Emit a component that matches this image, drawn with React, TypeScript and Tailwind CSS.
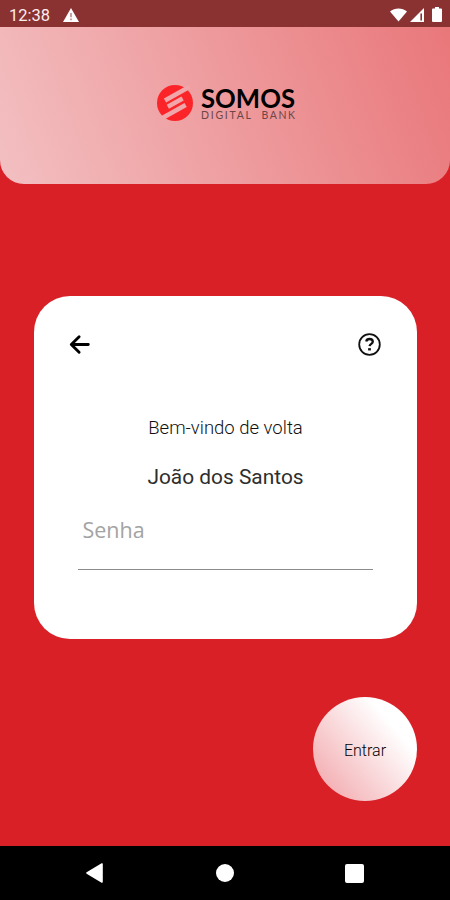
import { useState } from "react";

const LogoMark = () => (
  <svg viewBox="0 0 36 36" className="h-9 w-9 shrink-0">
    <circle cx="18" cy="18" r="18" fill="#fb2529" />
    <g stroke="#f1a6a9" strokeWidth="4.6" fill="none">
      <path d="M8 15.6 L32.5 1.8" />
      <path d="M10.8 21.8 L25.6 13.4" />
      <path d="M4.5 33.6 L28.6 20" />
    </g>
  </svg>
);

const Logo = () => (
  <div className="flex items-center gap-2">
    <LogoMark />
    <svg viewBox="0 -6 95 46" className="h-[46px] w-[95px] overflow-visible">
      <text
        x="0"
        y="22.4"
        textLength="94"
        lengthAdjust="spacingAndGlyphs"
        className="fill-black font-['Lato'] text-[27px] font-bold"
      >
        SOMOS
      </text>
      <text x="0" y="32.8" textLength="50" className="fill-[#6d4547] font-['Lato'] text-[10.5px]">
        DIGITAL
      </text>
      <text x="60.5" y="32.8" textLength="33.5" className="fill-[#6d4547] font-['Lato'] text-[10.5px]">
        BANK
      </text>
    </svg>
  </div>
);

const StatusBar = () => (
  <div className="flex h-[27px] shrink-0 items-center bg-[#8a3132] pr-2 pl-[9px] pt-[2px]">
    <span className="w-[41px] pt-[3px] font-['Roboto'] text-[16.5px] leading-none text-[#fbeeee]">12:38</span>
    <svg viewBox="0 0 16 14" className="ml-[13px] h-[14px] w-4">
      <path d="M8 0 L16 14 H0 Z" fill="#fff" />
      <path d="M8 5 V9.3 M8 10.6 V12.2" stroke="#b98083" strokeWidth="1.5" />
    </svg>
    <div className="ml-auto flex items-center gap-[3px]">
      <svg viewBox="0 0 18 14" className="h-[14px] w-[17px]">
        <path d="M0 3.2 C5 -1 13 -1 18 3.2 L9 14 Z" fill="#fff" />
      </svg>
      <svg viewBox="0 0 14 14" className="h-[14px] w-[14px]">
        <path d="M14 0 V14 H0 Z" fill="#fff" />
        <path d="M11.2 5.5 V12.5" stroke="#8a3132" strokeWidth="1.6" />
      </svg>
      <svg viewBox="0 0 10 15" className="ml-[5px] h-[15px] w-[10px]">
        <path d="M3 0 H7 V1.6 H9 Q10 1.6 10 2.6 V14 Q10 15 9 15 H1 Q0 15 0 14 V2.6 Q0 1.6 1 1.6 H3 Z" fill="#fff" />
      </svg>
    </div>
  </div>
);

const LoginCard = () => {
  const [password, setPassword] = useState("");

  return (
    <div className="mx-auto mt-28 flex h-[343px] w-[383px] flex-col rounded-[36px] bg-white pr-9 pl-[35px]">
      <div className="mt-[37px] flex items-center justify-between">
        <button type="button" aria-label="Voltar" className="pb-px">
          <svg viewBox="0 0 22 22" className="h-[21px] w-[21px]">
            <path
              d="M20.2 11 H2.8 M10.6 2.8 L2.4 11 L10.6 19.2"
              fill="none"
              stroke="#000"
              strokeWidth="3"
              strokeLinecap="round"
              strokeLinejoin="round"
            />
          </svg>
        </button>
        <button type="button" aria-label="Ajuda">
          <svg viewBox="0 0 23 23" className="h-[23px] w-[23px]" fill="none" stroke="#111">
            <circle cx="11.5" cy="11.5" r="10.3" strokeWidth="1.8" />
            <path d="M8.2 8.4 C8.6 6.7 9.9 6 11.5 6 C13.5 6 14.8 7.1 14.8 8.7 C14.8 10.9 11.8 10.8 11.6 13.2" strokeWidth="2.3" />
            <path d="M10.1 16.3 H12.9" strokeWidth="2.3" />
          </svg>
        </button>
      </div>
      <p className="mt-[60px] pl-[2px] text-center font-['Roboto'] text-[18.5px] leading-6 font-light text-[#111]">Bem-vindo de volta</p>
      <p className="mt-[23px] pl-[2px] text-center font-['Roboto'] text-[20.9px] leading-7 text-[#2e2e2e]">João dos Santos</p>
      <input
        type="password"
        placeholder="Senha"
        value={password}
        onChange={(e) => setPassword(e.target.value)}
        className="mt-3 mr-2 ml-[9px] h-[67px] border-b border-[#8c8c8c] pb-[14px] pl-[5px] font-['Open_Sans'] text-[21.5px] text-black outline-none placeholder:text-[#a3a3a3]"
      />
    </div>
  );
};

const NavBar = () => (
  <div className="flex h-[54px] shrink-0 items-center justify-between bg-black pr-[86px] pl-[86px]">
    <svg viewBox="0 0 18 20" className="h-5 w-[18px]">
      <path d="M1 10 L16 1 V19 Z" fill="#fff" stroke="#fff" strokeWidth="1.6" strokeLinejoin="round" />
    </svg>
    <div className="h-[18px] w-[18px] rounded-full bg-white" />
    <div className="h-[19px] w-[19px] rounded-[2px] bg-white" />
  </div>
);

export default function App() {
  return (
    <div className="flex h-[900px] w-[450px] flex-col overflow-hidden bg-[#d92027]">
      <StatusBar />
      <header className="flex h-[157px] shrink-0 items-center justify-center rounded-b-3xl bg-linear-[70deg,#f3c0c2,#e9777a] pb-[5px] pl-[3px]">
        <Logo />
      </header>
      <LoginCard />
      <button
        type="button"
        className="mt-[58px] mr-[33px] h-[104px] w-[104px] self-end rounded-full bg-linear-[50deg,#f1a0a5,#ffffff_75%] pt-[3px] font-['Roboto'] text-base font-light text-black"
      >
        Entrar
      </button>
      <div className="grow" />
      <NavBar />
    </div>
  );
}
